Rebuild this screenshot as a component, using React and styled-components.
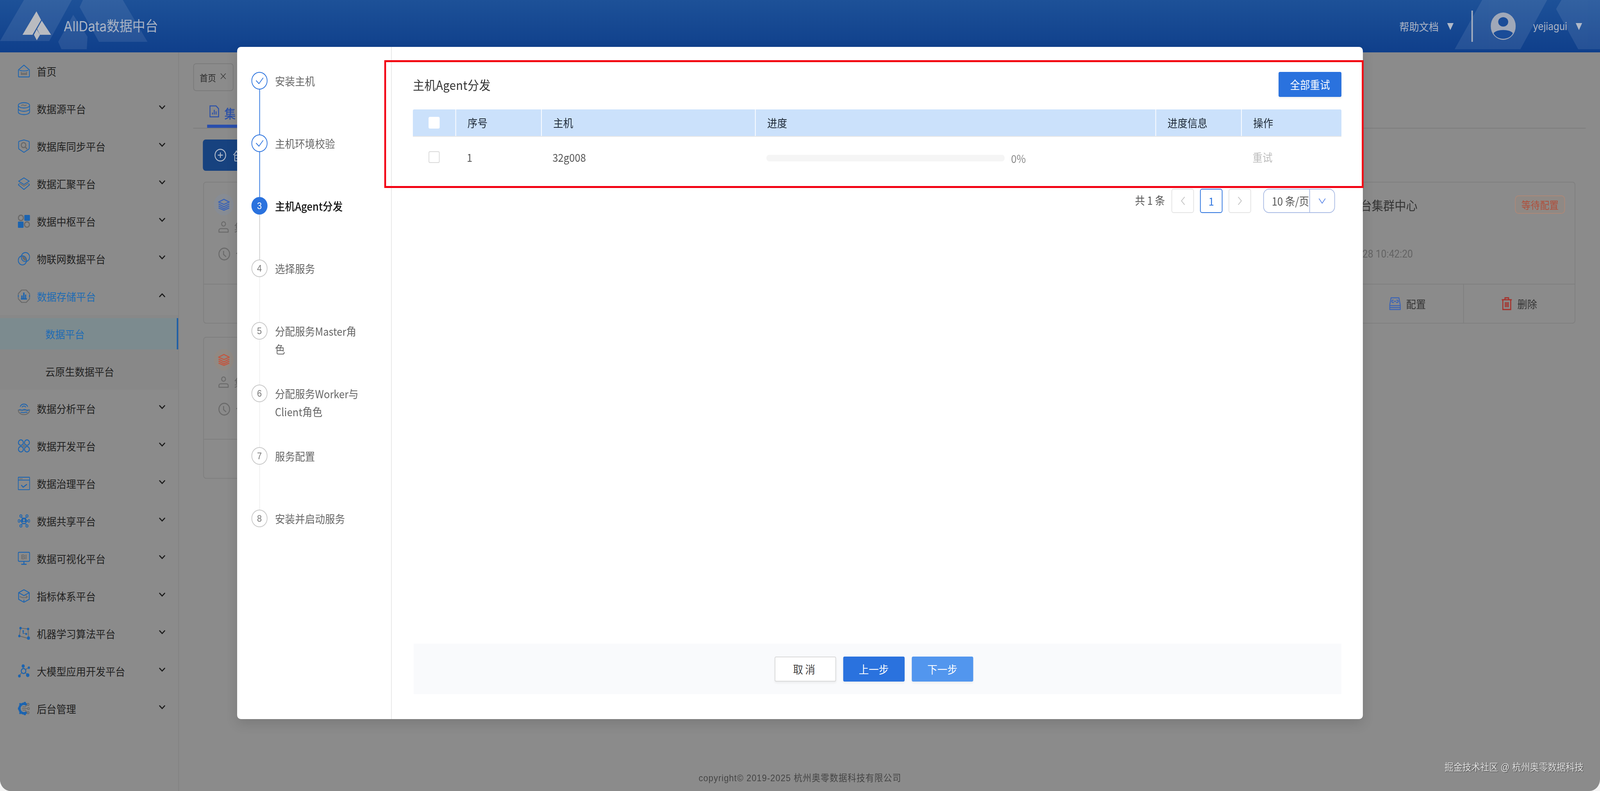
import React from "react";
import styled, { createGlobalStyle } from "styled-components";

const CJK = '"Noto Sans CJK SC", "Noto Sans", sans-serif';
const BLUE = "#1c64b0";
const GRAY = "#6a6a6a";

const Global = createGlobalStyle`
  html, body { margin: 0; padding: 0; width: 100%; height: 100%; background: #f4f4f4; overflow: hidden; }
  body { font-family: ${CJK}; }
  * { box-sizing: border-box; }
`;

const Root = styled.div`
  position: relative;
  width: 4480px;
  height: 2024px;
  overflow: hidden;
  background: #8b8b8b;
  border-radius: 0 0 30px 30px;
  display: flex;
  flex-direction: column;
  transform-origin: 0 0;
`;

/* ---------- header ---------- */
const Header = styled.header`
  position: relative;
  flex: 0 0 126px;
  display: flex;
  align-items: center;
  justify-content: space-between;
  padding: 0 50px 0 62px;
  background: linear-gradient(180deg, #1d5198 0%, #0f3f8b 100%);
  color: #a9b3c4;
`;
const HeaderDecor = styled.svg`
  position: absolute;
  inset: 0;
  width: 4480px;
  height: 126px;
`;
const Brand = styled.div`
  position: relative;
  display: flex;
  align-items: center;
  gap: 34px;
`;
const BrandName = styled.span`
  font-family: Inter, ${CJK};
  font-size: 36px;
  line-height: 134px;
`;
const HeaderRight = styled.div`
  position: relative;
  display: flex;
  align-items: center;
`;
const HeaderLabel = styled.span`
  font-family: Inter, ${CJK};
  font-size: ${(p) => p.$size}px;
  color: #aab3c4;
  margin-right: 24px;
`;
const Caret = styled.svg`
  width: 18px;
  height: 19px;
  flex: none;
`;
const HeaderSep = styled.div`
  width: 4px;
  height: 80px;
  background: #a7b0c0;
  margin: 0 50px;
`;
const Avatar = styled.svg`
  width: 70px;
  height: 70px;
  margin-right: 48px;
`;

/* ---------- body + sidebar ---------- */
const Body = styled.div`
  flex: 1;
  min-height: 0;
  display: flex;
`;
const Sidebar = styled.nav`
  flex: 0 0 501px;
  border-right: 2px solid #828282;
  background: #8b8b8b;
`;
const MenuItem = styled.div`
  height: 96px;
  display: flex;
  align-items: center;
  padding-left: 50px;
  color: ${(p) => (p.$open ? "#1f6cb4" : "#222")};
  font-size: 27.5px;
`;
const MenuIcon = styled.svg`
  width: 34px;
  height: 34px;
  flex: none;
  margin-right: 19px;
`;
const MenuLabel = styled.span`
  flex: 1;
`;
const Chevron = styled.svg`
  width: 18px;
  height: 12px;
  margin-right: 36px;
  margin-top: -6px;
  transform: ${(p) => (p.$up ? "rotate(180deg)" : "none")};
`;
const SubMenu = styled.div`
  padding: 8px 0 7px;
  background: #888888;
`;
const SubItem = styled.div`
  height: 80px;
  display: flex;
  align-items: center;
  padding-left: 127px;
  font-size: 27.5px;
  color: ${(p) => (p.$active ? "#1f6cb4" : "#222")};
  background: ${(p) => (p.$active ? "#7c8b8f" : "transparent")};
  border-right: ${(p) => (p.$active ? "4px solid #1a5ea8" : "none")};
  & + & {
    margin-top: 16px;
  }
`;

/* ---------- page behind the dialog ---------- */
const Main = styled.main`
  flex: 1;
  min-width: 0;
  padding: 28px 40px 0;
  display: flex;
  flex-direction: column;
  align-items: stretch;
`;
const TagBar = styled.div`
  display: flex;
`;
const Tag = styled.div`
  width: 113px;
  height: 71px;
  border: 2px solid #7b7b7b;
  border-radius: 8px;
  display: flex;
  align-items: center;
  gap: 12px;
  padding-left: 16px;
  font-size: 23px;
  color: #2b2b2b;
`;
const TagClose = styled.svg`
  width: 16px;
  height: 16px;
  margin-top: -6px;
`;
const Tabs = styled.div`
  height: 96px;
  display: flex;
  align-items: flex-end;
  border-bottom: 2px solid #7d7d7d;
  padding-left: 39px;
`;
const Tab = styled.div`
  height: 58px;
  display: flex;
  align-items: flex-start;
  gap: 14px;
  padding: 0 20px 0 6px;
  border-bottom: 8px solid #2a4fac;
  color: #2b50a8;
  font-size: 32px;
  font-weight: 500;
  line-height: 40px;
`;
const CreateButton = styled.div`
  align-self: flex-start;
  margin: 28px 0 0 27px;
  height: 80px;
  width: 200px;
  padding: 0 32px;
  display: flex;
  align-items: center;
  gap: 18px;
  background: #17427f;
  border-radius: 8px;
  color: #b3bccb;
  font-size: 30px;
`;
const CardGrid = styled.div`
  margin-top: 28px;
  padding: 0 29px 0 28px;
  display: grid;
  grid-template-columns: repeat(4, 1fr);
  gap: 34px 28px;
`;
const Card = styled.div`
  height: 363px;
  border: 2px solid #7f7f7f;
  border-radius: 8px;
  display: flex;
  flex-direction: column;
`;
const CardBody = styled.div`
  flex: 1;
  padding: 29px 27px 0 28px;
`;
const CardHead = styled.div`
  display: flex;
  align-items: center;
  gap: 28px;
  height: 55px;
`;
const CardLogo = styled.div`
  width: 55px;
  height: 55px;
  border-radius: 50%;
  flex: none;
  display: flex;
  align-items: center;
  justify-content: center;
  background: ${(p) => (p.$warm ? "#918a84" : "#878c94")};
`;
const CardTitle = styled.div`
  flex: 1;
  margin-right: 245px;
  text-align: right;
  font-size: 32px;
  color: #333;
  white-space: nowrap;
`;
const Badge = styled.span`
  height: 47px;
  padding: 0 16px;
  display: flex;
  align-items: center;
  border: 2px solid #ad8878;
  border-radius: 10px;
  color: #b04e3a;
  background: #8f8985;
  font-size: 26px;
`;
const CardRow = styled.div`
  display: flex;
  align-items: center;
  gap: 15px;
  height: 40px;
  padding-left: 12px;
  margin-top: ${(p) => p.$gap}px;
  font-family: Roboto, ${CJK};
  font-size: 27px;
  color: #636363;
  white-space: nowrap;
`;
const CardDate = styled.span`
  margin-left: auto;
  margin-right: 426px;
`;
const CardActions = styled.div`
  height: 100px;
  display: flex;
  border-top: 2px solid #7f7f7f;
`;
const CardAction = styled.div`
  flex: 1;
  display: flex;
  align-items: center;
  justify-content: center;
  gap: 15px;
  font-size: 27.5px;
  color: #333;
  & + & {
    border-left: 2px solid #7f7f7f;
  }
`;
const Copyright = styled.div`
  position: absolute;
  left: 0;
  right: 0;
  bottom: 18px;
  text-align: center;
  font-family: "Liberation Sans", ${CJK};
  font-size: 24px;
  line-height: 30px;
  letter-spacing: 1.1px;
  color: #444;
`;
const Watermark = styled.div`
  position: absolute;
  right: 46px;
  bottom: 44px;
  font-family: "Liberation Sans", ${CJK};
  font-size: 25px;
  line-height: 34px;
  color: #e4e4e4;
  text-shadow: 1px 1px 1px #333;
`;

/* ---------- dialog ---------- */
const Mask = styled.div`
  position: absolute;
  inset: 0;
  display: flex;
  justify-content: center;
  align-items: flex-start;
  padding-top: 120px;
`;
const Dialog = styled.section`
  position: relative;
  width: 3152px;
  height: 1720px;
  background: #fff;
  border-radius: 10px;
  display: flex;
  box-shadow: 0 12px 32px rgba(0, 0, 0, 0.12);
`;
const Steps = styled.aside`
  flex: 0 0 433px;
  border-right: 2px solid #e8e8e8;
  padding: 64px 0 0 40px;
`;
const Step = styled.div`
  position: relative;
  height: 160px;
  display: flex;
  align-items: flex-start;
  gap: 21px;
  &::after {
    content: "";
    display: ${(p) => (p.$last ? "none" : "block")};
    position: absolute;
    left: 22px;
    top: 45px;
    bottom: 0;
    width: 2px;
    background: ${(p) => p.$line};
  }
`;
const StepDot = styled.div`
  width: 45px;
  height: 45px;
  flex: none;
  border-radius: 50%;
  display: flex;
  align-items: center;
  justify-content: center;
  font-family: "Liberation Sans", sans-serif;
  font-size: 24px;
  color: ${(p) => (p.$state === "active" ? "#fff" : "#777")};
  background: ${(p) => (p.$state === "active" ? "#2a72de" : "#fff")};
  border: 2px solid ${(p) => (p.$state === "pending" ? "#c8c8c8" : "#2a72de")};
`;
const StepText = styled.div`
  width: 245px;
  font-size: 28px;
  line-height: 46px;
  color: ${(p) => (p.$state === "active" ? "#111" : "#666")};
  font-weight: ${(p) => (p.$state === "active" ? 500 : 400)};
`;
const Content = styled.div`
  flex: 1;
  min-width: 0;
  padding: 64px 60px 64px 59px;
  display: flex;
  flex-direction: column;
`;
const TitleRow = styled.div`
  display: flex;
  justify-content: space-between;
  align-items: center;
  height: 64px;
`;
const Title = styled.h2`
  margin: 0;
  font-size: 32px;
  font-weight: 400;
  letter-spacing: 0.4px;
  color: #333;
`;
const Button = styled.button`
  width: ${(p) => p.$w || 172}px;
  height: 64px;
  border: ${(p) => (p.$kind === "ghost" ? "2px solid #d9d9d9" : "none")};
  border-radius: 4px;
  padding: 0;
  font-family: ${CJK};
  font-size: 28px;
  letter-spacing: ${(p) => p.$ls || 0}px;
  color: ${(p) => (p.$kind === "ghost" ? "#444" : "#fff")};
  background: ${(p) =>
    p.$kind === "ghost" ? "#fff" : p.$kind === "light" ? "#5296ee" : "#2a72de"};
  box-shadow: 0 4px 6px rgba(0, 0, 0, 0.05);
`;
const columns = "119px 240px 599px 1121px 240px 281px";
const TableHead = styled.div`
  margin-top: 32px;
  display: grid;
  grid-template-columns: ${columns};
  height: 70px;
  background: #cbe1fb;
  border-bottom: 2px solid #e6e6e6;
  border-radius: 4px 4px 0 0;
`;
const HeadCell = styled.div`
  display: flex;
  align-items: center;
  padding-left: 32px;
  font-size: 28px;
  color: #1f2a37;
  & + & {
    border-left: 2px solid #fff;
  }
`;
const TableRow = styled.div`
  display: grid;
  grid-template-columns: ${columns};
  height: 105px;
`;
const Cell = styled.div`
  display: flex;
  align-items: center;
  padding-left: 32px;
  padding-bottom: 1px;
  margin-top: -1px;
  font-size: 28px;
  color: ${(p) => (p.$muted ? "#bdbdbd" : "#555")};
`;
const Check = styled.span`
  display: block;
  width: 31px;
  height: 30px;
  margin-left: 12px;
  background: #fff;
  border-radius: 4px;
  border: 2px solid ${(p) => (p.$plain ? "#fff" : "#d9d9d9")};
`;
const Track = styled.div`
  width: 667px;
  height: 17px;
  margin-top: 6px;
  border-radius: 8px;
  background: #f5f5f5;
`;
const Percent = styled.span`
  margin: 6px 0 0 18px;
  color: #888;
  font-size: 28px;
`;
const Pager = styled.div`
  margin-top: 28px;
  padding-right: 18px;
  display: flex;
  justify-content: flex-end;
  align-items: center;
  height: 62px;
  color: #555;
  font-size: 28px;
`;
const PagerTotal = styled.span`
  margin-right: 18px;
  margin-top: -4px;
`;
const PagerButton = styled.div`
  width: 63px;
  height: 62px;
  margin-right: 17px;
  border-radius: 6px;
  display: flex;
  align-items: center;
  justify-content: center;
  border: 2px solid ${(p) => (p.$current ? "#2a72de" : "#e3e3e3")};
  color: #2a72de;
`;
const PagerArrow = styled.svg`
  width: 14px;
  height: 24px;
`;
const SizeSelect = styled.div`
  width: 201px;
  height: 62px;
  margin-left: 17px;
  border: 2px solid #a9bbe4;
  border-radius: 16px;
  display: flex;
  align-items: center;
`;
const SizeText = styled.span`
  width: 127px;
  padding-left: 22px;
  white-space: nowrap;
  font-size: 28px;
  color: #555;
  overflow: hidden;
`;
const SizeArrow = styled.div`
  flex: 1;
  height: 100%;
  border-left: 2px solid #a9bbe4;
  display: flex;
  align-items: center;
  justify-content: center;
`;
const Footer = styled.div`
  margin-top: auto;
  margin-left: 2px;
  height: 129px;
  padding-right: 21px;
  background: #f9fafc;
  display: flex;
  align-items: center;
  justify-content: center;
  gap: 20px;
`;
const Highlight = styled.div`
  position: absolute;
  left: 412px;
  top: 34px;
  width: 2742px;
  height: 327px;
  border: 5px solid #f20011;
  pointer-events: none;
`;

/* ---------- drawings ---------- */
const S = { fill: "none", stroke: BLUE, strokeWidth: 2 };
const G = { fill: "none", stroke: GRAY, strokeWidth: 2 };
const icons = {
  home: (
    <>
      <path {...S} d="M1.500 13 16 1.500 30.500 13v15a2 2 0 0 1-2 2h-25a2 2 0 0 1-2-2z" strokeLinejoin="round" />
      <path {...S} d="M4 13.500c4 2 8 2 12 2s8 0 12-2" />
      <path {...G} d="M9 18v6h14v-6M9 21h14" strokeWidth="2.200" />
    </>
  ),
  source: (
    <>
      <ellipse {...S} cx="16" cy="8" rx="15" ry="6.500" />
      <path {...S} d="M1 8v16c0 3.600 6.700 6.500 15 6.500S31 27.600 31 24V8M1 16c0 3.600 6.700 6.500 15 6.500S31 19.600 31 16" />
      <path {...G} d="M9 9c3-3 5-2 7-1s4 1 7-1" />
    </>
  ),
  sync: (
    <>
      <path {...S} d="M2 6c0-1 .6-1.500 1.500-1.800L16 1l12.500 3.200c.9.300 1.500.8 1.500 1.800v15c0 1-.5 1.700-1.300 2.200L16 31 3.300 23.200C2.500 22.700 2 22 2 21z" strokeLinejoin="round" />
      <circle {...G} cx="15" cy="13.500" r="6" strokeWidth="2.800" />
      <path {...G} d="m19.500 18 5 5" strokeWidth="3.200" />
    </>
  ),
  layers: (
    <>
      <path {...S} d="M16 2 30 10 16 18 2 10z" strokeLinejoin="round" />
      <path {...G} d="m4 15 12 7 12-7" />
      <path {...S} d="M3 16 1.500 19l14.500 11 14.500-11L29 16" strokeLinejoin="round" />
    </>
  ),
  hub: (
    <>
      <circle {...G} cx="8" cy="8" r="6.500" strokeWidth="3" />
      <rect x="17" y="1" width="15" height="14" rx="2" fill={BLUE} />
      <rect x="0" y="17" width="15" height="15" rx="2" fill={BLUE} />
      <circle {...G} cx="24" cy="24" r="6.500" strokeWidth="3" />
    </>
  ),
  iot: (
    <>
      <circle {...S} cx="20" cy="12" r="11" />
      <circle {...S} cx="12" cy="20" r="11" />
      <path d="M11 10a11 11 0 0 1 11 11 11 11 0 0 1-11-11z" fill={GRAY} />
    </>
  ),
  storage: (
    <>
      <path {...G} d="M10 1h12l9 9v12l-9 9H10l-9-9V10z" strokeWidth="2.400" />
      <path d="M8 24h16v-3h-2v-9h-3v9h-1.500V7h-3.500v14h-1.500v-7H9v7H8z" fill={BLUE} />
      <path {...S} d="M1 13v5M31 13v5" strokeWidth="2.400" />
    </>
  ),
  analysis: (
    <>
      <path {...S} d="M6 12a11 11 0 0 1 20 0M11 13a6 6 0 0 1 10 0" />
      <path {...G} d="M1 20h30a15 11 0 0 1-30 0z" strokeWidth="2.400" />
      <path {...S} d="M3 20c4-3 6 2 10 0s6-2 9 0 5 1 8-1M7 26c3-2 5 1 9 0s6-2 9 0" />
    </>
  ),
  dev: (
    <>
      <circle {...S} cx="8" cy="8" r="6.500" strokeWidth="2.400" />
      <circle {...S} cx="24" cy="8" r="6.500" strokeWidth="2.400" />
      <circle {...S} cx="8" cy="24" r="6.500" strokeWidth="2.400" />
      <circle {...S} cx="24" cy="24" r="6.500" strokeWidth="2.400" />
      <path {...G} d="M16 12v8M12 16h8" />
    </>
  ),
  gov: (
    <>
      <rect {...S} x="1" y="1" width="30" height="30" rx="1" />
      <path {...S} d="M1 8h30" />
      <path {...G} d="M4 4.700h8" strokeDasharray="2 1" strokeWidth="2.400" />
      <path {...S} d="m9 20 5 5 10-7" strokeWidth="2.400" />
    </>
  ),
  share: (
    <>
      <g {...S}>
        <circle cx="8" cy="4" r="2.800" />
        <circle cx="24" cy="4" r="2.800" />
        <circle cx="3" cy="16" r="2.800" />
        <circle cx="29" cy="16" r="2.800" />
        <circle cx="8" cy="28" r="2.800" />
        <circle cx="24" cy="28" r="2.800" />
        <path d="m10 7 3 4M22 7l-3 4M6 16h3M23 16h3M10 25l3-4M22 25l-3-4" />
      </g>
      <circle cx="16" cy="16" r="8" fill={BLUE} />
      <circle cx="16" cy="14" r="2.500" fill="#8b8b8b" />
      <path d="M11 21c1-4 9-4 10 0z" fill="#8b8b8b" />
    </>
  ),
  bi: (
    <>
      <rect {...S} x="1" y="1" width="30" height="22" rx="2.500" strokeWidth="2.200" />
      <path {...S} d="M16 23v7M9 30h14" strokeWidth="2.500" />
      <text x="16" y="18" textAnchor="middle" fontFamily="Liberation Sans" fontWeight="700" fontSize="15" fill={GRAY}>BI</text>
    </>
  ),
  cube: (
    <>
      <path {...S} d="M16 1 30 8v16l-14 7-14-7V8z" strokeLinejoin="round" strokeWidth="2.200" />
      <path {...S} d="m2 8 14 7 14-7M16 25v6" strokeWidth="2.200" />
      <path {...G} d="M5 17c4 3 12 5 20 1m-4-3 4 3-4 3" />
    </>
  ),
  ml: (
    <>
      <path {...G} d="M7 3 4 22l24 6-1-23z" strokeWidth="2.200" />
      <path {...G} d="M13 16h7" />
      <path {...S} d="M14 9v7" strokeWidth="2.400" />
      <g fill={BLUE}>
        <circle cx="7" cy="3" r="3" />
        <circle cx="27" cy="5" r="3" />
        <circle cx="4" cy="22" r="3" />
        <circle cx="28" cy="27" r="4" />
        <circle cx="14" cy="10" r="2" />
        <circle cx="22" cy="17" r="2.500" />
      </g>
    </>
  ),
  llm: (
    <>
      <path {...G} d="M14 8v3M20 13l6-4M10 20l-5 6M20 20l5 5" strokeWidth="2.400" />
      <circle cx="15" cy="16" r="6" fill="none" stroke={BLUE} strokeWidth="2.600" />
      <g fill={BLUE}>
        <circle cx="14" cy="4" r="4" />
        <circle cx="29" cy="8" r="3" />
        <circle cx="4" cy="28" r="3.500" />
        <circle cx="26" cy="26" r="4.500" />
      </g>
    </>
  ),
  admin: (
    <>
      <path d="M23 7a11.500 11.500 0 1 0 0 18" fill="none" stroke={BLUE} strokeWidth="6" />
      <path d="M16 0h5v4h-5zM16 28h5v4h-5zM3 5l3-3 3 3-3 3zM3 27l3-3 3 3-3 3zM0 13.500h3v5H0z" fill={BLUE} />
      <g {...G} strokeWidth="1.800">
        <path d="M11 16h14M12 12h8l4-5M12 20h8l4 5" />
        <circle cx="27" cy="6" r="2.500" />
        <circle cx="28" cy="16" r="2.500" />
        <circle cx="27" cy="26" r="2.500" />
      </g>
    </>
  ),
};

const Stack = ({ color }) => (
  <svg width="34" height="32" viewBox="0 0 34 32" fill="none" stroke={color} strokeWidth="2.500" strokeLinejoin="round">
    <path d="M17 2 32 9 17 15 2 9z" />
    <path d="m2 14 15 7 15-7M2 19l15 7 15-7M2 24l15 6 15-6" />
  </svg>
);
const PersonIcon = () => (
  <svg width="30" height="30" viewBox="0 0 30 30" fill="none" stroke="#6b6b6b" strokeWidth="2.600">
    <circle cx="15" cy="7" r="5.500" />
    <path d="M2 28v-4c0-3 2-5 5-5h16c3 0 5 2 5 5v4z" strokeLinejoin="round" />
  </svg>
);
const ClockIcon = () => (
  <svg width="34" height="34" viewBox="0 0 34 34" fill="none" stroke="#6b6b6b" strokeWidth="2.800">
    <circle cx="17" cy="17" r="15" />
    <path d="M15 9v9l7 6" />
  </svg>
);
const Tick = () => (
  <svg width="22" height="18" viewBox="0 0 22 18" fill="none" stroke="#2a72de" strokeWidth="2">
    <path d="m1 8 8 8L21 1" />
  </svg>
);
const Down = ({ up }) => (
  <Chevron $up={up} viewBox="0 0 18 12" fill="none" stroke="#1c1c1c" strokeWidth="3" strokeLinecap="round" strokeLinejoin="round">
    <path d="m2 2 7 7 7-7" />
  </Chevron>
);
const Tri = () => (
  <Caret viewBox="0 0 18 19">
    <path d="M0 1h18L9 19z" fill="#b2bac8" />
  </Caret>
);

const menuTop = [
  ["home", "首页", true],
  ["source", "数据源平台"],
  ["sync", "数据库同步平台"],
  ["layers", "数据汇聚平台"],
  ["hub", "数据中枢平台"],
  ["iot", "物联网数据平台"],
];
const menuBottom = [
  ["analysis", "数据分析平台"],
  ["dev", "数据开发平台"],
  ["gov", "数据治理平台"],
  ["share", "数据共享平台"],
  ["bi", "数据可视化平台"],
  ["cube", "指标体系平台"],
  ["ml", "机器学习算法平台"],
  ["llm", "大模型应用开发平台"],
  ["admin", "后台管理"],
];
const MenuRow = ({ icon, label, bare, open }) => (
  <MenuItem $open={open}>
    <MenuIcon viewBox="0 0 32 32">{icons[icon]}</MenuIcon>
    <MenuLabel>{label}</MenuLabel>
    {!bare && <Down up={open} />}
  </MenuItem>
);

const steps = [
  ["安装主机", "done", "#2a72de"],
  ["主机环境校验", "done", "#2a72de"],
  ["主机Agent分发", "active", "#cccccc"],
  ["选择服务", "pending", "#eeeeee"],
  ["分配服务Master角色", "pending", "#eeeeee"],
  ["分配服务Worker与Client角色", "pending", "#eeeeee"],
  ["服务配置", "pending", "#eeeeee"],
  ["安装并启动服务", "pending", "#eeeeee"],
];

/* Most of each card lies under the dialog: only what shows beside it has text. */
const ClusterCard = ({ warm, who, when, children }) => (
  <Card>
    <CardBody>
      <CardHead>
        <CardLogo $warm={warm}>
          <Stack color={warm ? "#c4563f" : "#3a63b6"} />
        </CardLogo>
      </CardHead>
      <CardRow $gap={10}>
        <PersonIcon />
        {who}
      </CardRow>
      <CardRow $gap={29}>
        <ClockIcon />
        {when}
      </CardRow>
    </CardBody>
    <CardActions>{children}</CardActions>
  </Card>
);

const StatusCard = () => (
  <Card>
    <CardBody>
      <CardHead>
        <CardTitle>台集群中心</CardTitle>
        <Badge>等待配置</Badge>
      </CardHead>
      <CardRow $gap={79}>
        <CardDate>28 10:42:20</CardDate>
      </CardRow>
    </CardBody>
    <CardActions>
      <CardAction />
      <CardAction>
        <svg width="32" height="34" viewBox="0 0 32 34" fill="none" stroke="#3a63b6" strokeWidth="2.600" strokeLinejoin="round">
          <path d="M5 2h22l4 20v10H1V22zM1 22h30M1 27h30" />
          <path d="M12 8h-2a3 3 0 0 0 0 6h3M20 8h2a3 3 0 0 1 0 6h-3M13 11h6" />
        </svg>
        配置
      </CardAction>
      <CardAction>
        <svg width="30" height="34" viewBox="0 0 30 34" fill="none" stroke="#a6302a" strokeWidth="2.800">
          <path d="M1 7h28M10 7V2h10v5M4 7v25h22V7M11 13v13M15 13v13M19 13v13" />
        </svg>
        删除
      </CardAction>
    </CardActions>
  </Card>
);

export default function App() {
  /* The browser may cap the window below the 4480px of the design: fit the width. */
  const fit = `scaleX(${Math.min(1, window.innerWidth / 4480)})`;
  return (
    <>
      <Global />
      <Root style={{ transform: fit }}>
        <Header>
          <HeaderDecor viewBox="0 0 4480 126">
            <g fill="#fff" opacity="0.09">
              <path d="M0 105h138L201 0H67z" />
              <path d="M223 18 232 0h112l69 107H277z" />
              <path d="m205 38 40 56-2 32h-71l-9-19z" />
              <path d="M4073 126 4150 0h182l-75 126z" />
              <path d="m4357 23 15-23h108v126h-61z" />
            </g>
          </HeaderDecor>
          <Brand>
            <svg width="82" height="76" viewBox="0 0 82 76" fill="#b9bbc0">
              <path d="M40 0 53 22 29 60H1z" />
              <path d="M55 24 81 60H50L42 45z" />
              <path d="M41 46 50 60 41 74 33 60z" />
            </svg>
            <BrandName>AllData数据中台</BrandName>
          </Brand>
          <HeaderRight>
            <HeaderLabel $size={27.5}>帮助文档</HeaderLabel>
            <Tri />
            <HeaderSep />
            <Avatar viewBox="0 0 70 70">
              <circle cx="35" cy="35" r="35" fill="#a0a8b8" />
              <ellipse cx="35" cy="24" rx="14" ry="12" fill="#1a4c98" />
              <path d="M8 53c8-11 46-11 54 0-10 19-44 19-54 0z" fill="#1a4c98" />
            </Avatar>
            <HeaderLabel $size={26.5}>yejiagui</HeaderLabel>
            <Tri />
          </HeaderRight>
        </Header>
        <Body>
          <Sidebar>
            {menuTop.map(([i, l, bare]) => (
              <MenuRow key={l} icon={i} label={l} bare={bare} />
            ))}
            <MenuRow icon="storage" label="数据存储平台" open />
            <SubMenu>
              <SubItem $active>数据平台</SubItem>
              <SubItem>云原生数据平台</SubItem>
            </SubMenu>
            {menuBottom.map(([i, l]) => (
              <MenuRow key={l} icon={i} label={l} />
            ))}
          </Sidebar>
          <Main>
            <TagBar>
              <Tag>
                首页
                <TagClose viewBox="0 0 16 16" stroke="#333" strokeWidth="1.500">
                  <path d="m1 1 14 14M15 1 1 15" />
                </TagClose>
              </Tag>
            </TagBar>
            <Tabs>
              <Tab>
                <svg width="28" height="32" viewBox="0 0 28 32" fill="none" stroke="#2b50a8" strokeWidth="2.600">
                  <path d="M2 2h17l7 7v21H2z" />
                  <path d="M9 24v-5M14 24V12M19 24v-8" />
                </svg>
                集
              </Tab>
            </Tabs>
            <CreateButton>
              <svg width="34" height="34" viewBox="0 0 34 34" fill="none" stroke="#b3bccb" strokeWidth="2.400">
                <circle cx="17" cy="17" r="15" />
                <path d="M17 10v14M10 17h14" />
              </svg>
              创
            </CreateButton>
            <CardGrid>
              <ClusterCard who="集" when="创" />
              <Card />
              <Card />
              <StatusCard />
              <ClusterCard warm who="集" when="创" />
            </CardGrid>
          </Main>
        </Body>
        <Copyright>copyright© 2019-2025 杭州奥零数据科技有限公司</Copyright>
        <Watermark>掘金技术社区 @ 杭州奥零数据科技</Watermark>
        <Mask>
          <Dialog>
            <Steps>
              {steps.map(([label, state, line], i) => (
                <Step key={label} $line={line} $last={i === steps.length - 1}>
                  <StepDot $state={state}>{state === "done" ? <Tick /> : i + 1}</StepDot>
                  <StepText $state={state}>{label}</StepText>
                </Step>
              ))}
            </Steps>
            <Content>
              <TitleRow>
                <Title>主机Agent分发</Title>
                <Button $w={176}>全部重试</Button>
              </TitleRow>
              <TableHead>
                <HeadCell><Check $plain /></HeadCell>
                <HeadCell>序号</HeadCell>
                <HeadCell>主机</HeadCell>
                <HeadCell>进度</HeadCell>
                <HeadCell>进度信息</HeadCell>
                <HeadCell>操作</HeadCell>
              </TableHead>
              <TableRow>
                <Cell><Check /></Cell>
                <Cell>1</Cell>
                <Cell>32g008</Cell>
                <Cell>
                  <Track />
                  <Percent>0%</Percent>
                </Cell>
                <Cell />
                <Cell $muted>重试</Cell>
              </TableRow>
              <Pager>
                <PagerTotal>共 1 条</PagerTotal>
                <PagerButton>
                  <PagerArrow viewBox="0 0 14 24" fill="none" stroke="#c4c4c4" strokeWidth="2">
                    <path d="M12 2 3 12l9 10" />
                  </PagerArrow>
                </PagerButton>
                <PagerButton $current>1</PagerButton>
                <PagerButton>
                  <PagerArrow viewBox="0 0 14 24" fill="none" stroke="#c4c4c4" strokeWidth="2">
                    <path d="m2 2 9 10-9 10" />
                  </PagerArrow>
                </PagerButton>
                <SizeSelect>
                  <SizeText>10 条/页</SizeText>
                  <SizeArrow>
                    <svg width="20" height="14" viewBox="0 0 20 14" fill="none" stroke="#5c87e8" strokeWidth="2">
                      <path d="m1 1 9 12 9-12" />
                    </svg>
                  </SizeArrow>
                </SizeSelect>
              </Pager>
              <Footer>
                <Button $kind="ghost" $ls={6}>取消</Button>
                <Button>上一步</Button>
                <Button $kind="light">下一步</Button>
              </Footer>
            </Content>
            <Highlight />
          </Dialog>
        </Mask>
      </Root>
    </>
  );
}
